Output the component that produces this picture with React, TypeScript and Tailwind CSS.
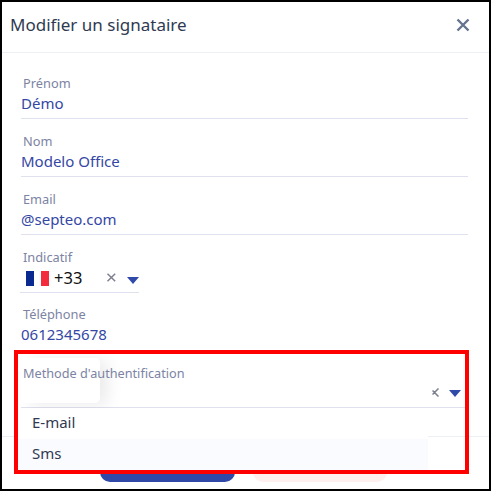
import React from "react";

const font = { fontFamily: '"Noto Sans", sans-serif' };

function Field({ label, value }: { label: string; value: string }) {
  return (
    <div className="h-[58px] pt-[12px] border-b border-[#dfe1ee] box-border">
      <div className="pl-[2px] text-[12.8px] leading-[20px] text-[#7c83a3]">{label}</div>
      <div className="text-[15px] leading-[20px] text-[#3447a5]">{value}</div>
    </div>
  );
}

function Caret() {
  return (
    <svg width="12" height="7" viewBox="0 0 12 7" className="block">
      <path d="M0 0H12L6 7Z" fill="#2f4aa8" />
    </svg>
  );
}

export default function App() {
  return (
    <div style={font} className="relative w-[491px] h-[491px] bg-white border-2 border-black box-border overflow-hidden">
      <div className="flex items-center justify-between h-[51px] pl-[8px] pr-[19px] border-b border-[#edeff7] box-border">
        <span className="text-[17px] leading-[20px] mb-[5px] text-[#2f3a52]">Modifier un signataire</span>
        <svg width="14" height="14" viewBox="0 0 14 14" className="mb-[4px]">
          <path d="M1.5 1.5L12.5 12.5M12.5 1.5L1.5 12.5" stroke="#64748f" strokeWidth="2.4" />
        </svg>
      </div>

      <div className="pl-[19px] pr-[21px] pt-[8px]">
        <Field label="Prénom" value="Démo" />
        <Field label="Nom" value="Modelo Office" />
        <Field label="Email" value="@septeo.com" />

        <div className="-ml-px w-[119px] h-[58px] pt-[12px] border-b border-[#dfe1ee] box-border">
          <div className="pl-[3px] text-[12.8px] leading-[20px] text-[#7c83a3]">Indicatif</div>
          <div className="flex items-center h-[22px] pl-[6px]">
            <span className="flex w-[23px] h-[15px]">
              <span className="w-[8px] bg-[#0b2a8f]" />
              <span className="w-[7px] bg-white" />
              <span className="w-[8px] bg-[#f22c3d]" />
            </span>
            <span className="ml-[5px] text-[16.5px] leading-[20px] text-[#111111]">+33</span>
            <svg width="9" height="9" viewBox="0 0 9 9" className="ml-[25px] mb-[2px]">
              <path d="M0.5 0.5L8.5 8.5M8.5 0.5L0.5 8.5" stroke="#7b7f8f" strokeWidth="1.5" />
            </svg>
            <span className="ml-[11px] mt-[4px]"><Caret /></span>
          </div>
        </div>

        <div className="h-[58px] pt-[11px] box-border">
          <div className="pl-[2px] text-[12.8px] leading-[20px] text-[#7c83a3]">Téléphone</div>
          <div className="text-[15px] leading-[20px] text-[#3447a5]">0612345678</div>
        </div>

        <div className="h-[57px] box-border border-b border-[#dfe1ee] pt-[12px] relative">
          <div className="absolute left-0 top-[7px] w-[79px] h-[45px] rounded-[5px] bg-white shadow-[8px_2px_16px_rgba(0,0,0,0.08)]" />
          <div className="relative pl-[2px] text-[12.7px] leading-[20px] text-[#7c83a3]">Methode d'authentification</div>
          <div className="relative flex items-center justify-end h-[20px] pr-[7px]">
            <svg width="7" height="9" viewBox="0 0 7 9" className="mr-[10px] mb-[1px]">
              <path d="M6.5 0.5L2.5 4.5L6.5 8.5M2.5 4.5L0.5 2.5M2.5 4.5L0.5 6.5" fill="none" stroke="#7b7f8f" strokeWidth="1.5" />
            </svg>
            <span className="mt-[1px]"><Caret /></span>
          </div>
        </div>

        <div className="relative z-10 -ml-[3px] w-[410px] text-[15px] text-[#2f3a52]">
          <div className="h-[31px] flex items-center pl-[14px] pb-[2px] bg-white">E-mail</div>
          <div className="h-[32px] flex items-center pl-[14px] pb-[3px] bg-[#fafbff]">Sms</div>
        </div>
      </div>

      <div className="absolute left-0 right-0 top-[434px] border-t border-[#edeff7]" />
      <div className="absolute left-[98px] top-[470px] w-[135px] h-[10px] rounded-b-[10px] bg-[#3049a8]" />
      <div className="absolute left-[251px] top-[470px] w-[134px] h-[10px] rounded-b-[10px] bg-[#fdf0ef]" />
      <div className="absolute z-20 left-[12px] top-[348px] w-[455px] h-[124px] border-[4px] border-[#ff0000] box-border pointer-events-none" />
    </div>
  );
}
